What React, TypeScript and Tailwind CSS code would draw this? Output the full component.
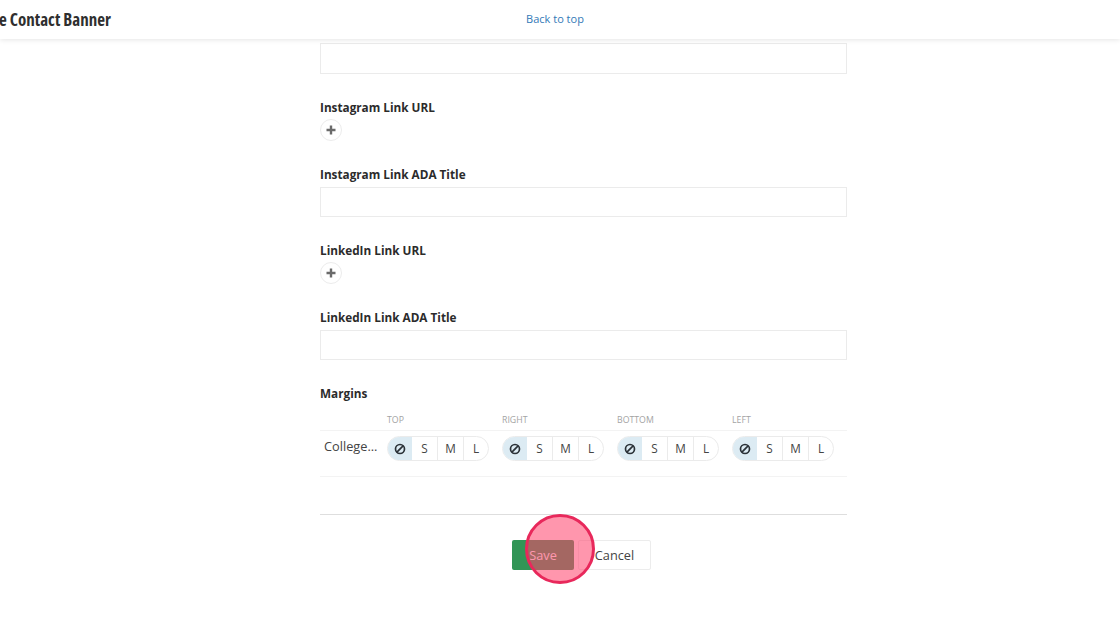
import clsx from 'clsx'

const columns = ['Top', 'Right', 'Bottom', 'Left']
const sizes = [
  { label: 'S', width: 'w-[25px]' },
  { label: 'M', width: 'w-[26px]' },
  { label: 'L', width: 'w-[25px]' },
]

function FieldLabel({ children }: { children: string }) {
  return <label className="block h-4 text-[11.75px] leading-3.5 font-bold text-[#2b2b2b]">{children}</label>
}

function TextField({ label }: { label: string }) {
  return (
    <div>
      <FieldLabel>{label}</FieldLabel>
      <input type="text" className="mt-1 block h-[30px] w-full border border-[#ebebeb] bg-white px-2 text-[13px] outline-none" />
    </div>
  )
}

function LinkField({ label }: { label: string }) {
  return (
    <div className="pb-px">
      <FieldLabel>{label}</FieldLabel>
      <button className="mt-[3px] flex h-[22px] w-[22px] items-center justify-center rounded-full border border-[#ececec] bg-white">
        <svg width="10" height="10" viewBox="0 0 10 10" fill="none" stroke="#6a6a6a" strokeWidth="2.4">
          <path d="M5 .5v9M.5 5h9" />
        </svg>
      </button>
    </div>
  )
}

function NoneIcon() {
  return (
    <svg width="12" height="12" viewBox="0 0 12 12" fill="none" stroke="#2b3238" strokeWidth="1.7">
      <circle cx="6" cy="6" r="4.5" />
      <path d="M2.9 9.1l6.2-6.2" />
    </svg>
  )
}

function SizePicker() {
  return (
    <div className="flex h-[25px] w-[102px] overflow-hidden rounded-full border border-[#ebebeb] bg-white">
      <button className="-my-px -ml-px flex w-[25px] items-center justify-center bg-[#dcebf3]">
        <NoneIcon />
      </button>
      {sizes.map((size, i) => (
        <button
          key={size.label}
          className={clsx('text-[11.75px] leading-[23px] text-[#444]', size.width, i > 0 && 'border-l border-[#ebebeb]')}
        >
          {size.label}
        </button>
      ))}
    </div>
  )
}

function Margins() {
  return (
    <div>
      <FieldLabel>Margins</FieldLabel>
      <div className="mt-3 flex h-[17px] border-b border-[#f3f3f3] pl-[67px]">
        {columns.map((column) => (
          <div key={column} className="w-[115px] shrink-0 text-[8.75px] leading-[13px] text-[#a3a3a3] uppercase">
            {column}
          </div>
        ))}
      </div>
      <div className="flex h-[46px] border-b border-[#f3f3f3] pt-[5px]">
        <div className="w-[67px] pl-1 text-[12.75px] leading-5 text-[#444]">College...</div>
        {columns.map((column) => (
          <div key={column} className="w-[115px] shrink-0">
            <SizePicker />
          </div>
        ))}
      </div>
    </div>
  )
}

export default function App() {
  return (
    <div className="h-[625px] w-[1120px] overflow-hidden bg-white font-['Open_Sans','Noto_Sans',sans-serif]">
      <header className="relative z-10 grid h-[39px] grid-cols-[1fr_auto_1fr] items-center bg-white shadow-[0_1px_5px_rgba(0,0,0,0.1)]">
        <h1 className="-ml-px text-[17px] leading-6 font-bold font-stretch-condensed whitespace-nowrap text-[#2f2f2f]">
          e Contact Banner
        </h1>
        <a href="#" className="mr-[10px] text-[11px] text-[#337ab7]">Back to top</a>
      </header>

      <main className="ml-[320px] w-[527px] pt-1">
        <input type="text" className="block h-[31px] w-full border border-[#ebebeb] bg-white px-2 text-[13px] outline-none" />
        <div className="mt-[26px] flex flex-col gap-[25px]">
          <LinkField label="Instagram Link URL" />
          <TextField label="Instagram Link ADA Title" />
          <div className="mt-px">
            <LinkField label="LinkedIn Link URL" />
          </div>
          <TextField label="LinkedIn Link ADA Title" />
          <div className="mt-px">
            <Margins />
          </div>
        </div>

        <div className="mt-[37px] flex border-t border-[#dedede] pt-[25px] pl-[192px]">
          <div className="relative">
            <button className="block h-[30px] w-[62px] rounded-[2px] bg-[#319556] pt-px text-[12.75px] text-white">Save</button>
            {/* click marker */}
            <span className="pointer-events-none absolute top-[-26px] left-[13px] z-10 h-[70px] w-[70px] rounded-full border-[3px] border-[#e8285b] bg-[#ff436c]/56" />
          </div>
          <button className="ml-1 h-[30px] w-[73px] rounded-[2px] border border-[#ececec] bg-white pt-px text-[12.75px] text-[#444]">
            Cancel
          </button>
        </div>
      </main>
    </div>
  )
}
